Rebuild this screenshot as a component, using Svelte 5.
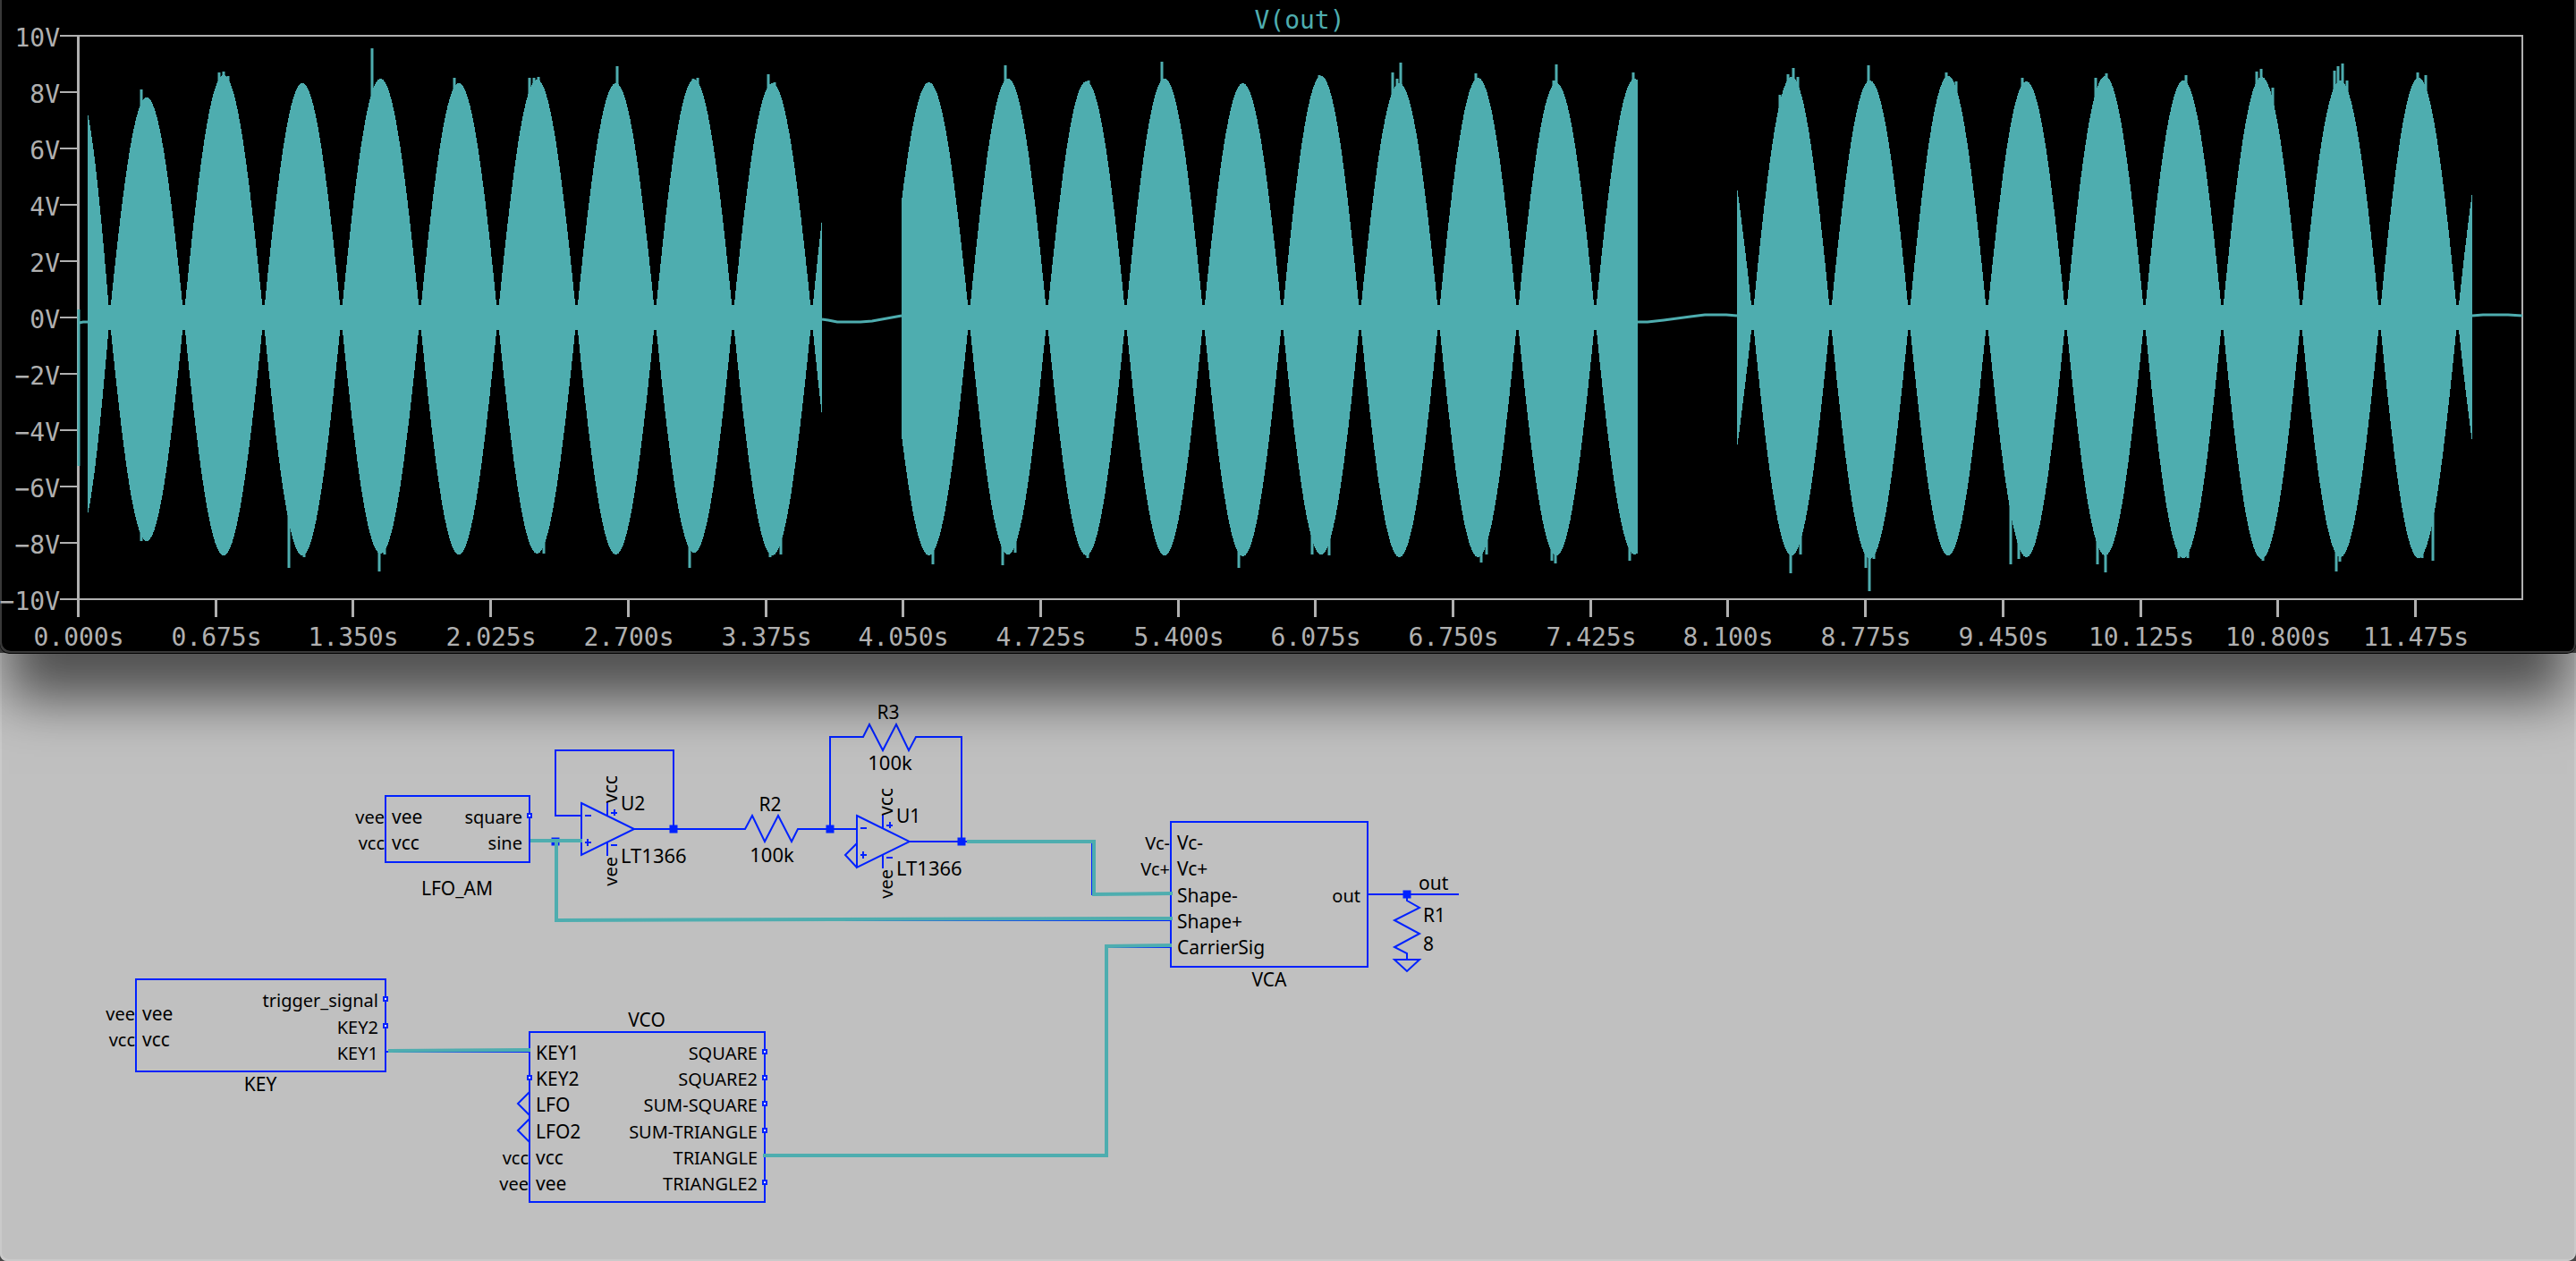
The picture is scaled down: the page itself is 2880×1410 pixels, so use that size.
<script>
  // ---- waveform trace ----
  const ZERO = 355;
  // Each lobe: [null before, null after, upper peak y, lower peak y]
  const bursts = [
    {
      from: 98, to: 919,
      lobes: [
        [54, 122, 103, 598], [122, 205, 109, 605], [205, 294, 84, 621], [294, 381, 93, 621],
        [381, 469, 88, 619], [469, 556, 93, 620], [556, 644, 89, 619], [644, 732, 93, 620],
        [732, 819, 89, 618], [819, 907, 93, 621], [907, 994, 88, 622]
      ]
    },
    {
      from: 1008, to: 1831,
      lobes: [
        [993, 1083, 92, 621], [1083, 1170, 88, 620], [1170, 1258, 91, 621], [1258, 1345, 88, 621],
        [1345, 1433, 93, 622], [1433, 1520, 85, 620], [1520, 1608, 93, 623], [1608, 1696, 87, 623],
        [1696, 1783, 93, 621], [1783, 1871, 88, 620]
      ]
    },
    {
      from: 1942, to: 2764,
      lobes: [
        [1871, 1959, 110, 600], [1959, 2046, 86, 621], [2046, 2134, 90, 625], [2134, 2221, 85, 621],
        [2221, 2309, 91, 623], [2309, 2397, 85, 621], [2397, 2484, 90, 624], [2484, 2572, 86, 625],
        [2572, 2660, 90, 623], [2660, 2747, 87, 624], [2747, 2835, 107, 602]
      ]
    }
  ];

  const spikes = [
    [158, 100], [245, 81], [250, 80], [255, 85], [416, 54], [508, 87], [592, 87], [597, 87], [602, 86],
    [690, 74], [775, 88], [780, 87], [859, 83], [866, 92], [1124, 73], [1217, 90], [1299, 69],
    [1475, 84], [1557, 81], [1562, 88], [1566, 70], [1650, 82], [1737, 90], [1740, 72], [1826, 81],
    [1999, 83], [2005, 76], [2010, 86], [1990, 106], [2089, 73], [2176, 81], [2187, 91], [2261, 87],
    [2343, 87], [2355, 82], [2444, 84], [2523, 80], [2528, 77], [2541, 98], [2610, 79], [2614, 74],
    [2619, 71], [2624, 90], [2703, 81], [2712, 84],
    [158, 605], [323, 635], [340, 623], [424, 639], [430, 620], [608, 619], [771, 635], [861, 623], [873, 620],
    [1043, 631], [1121, 632], [1135, 618], [1216, 624], [1385, 635], [1467, 620], [1486, 621],
    [1656, 629], [1662, 620], [1735, 627], [1739, 630], [1822, 627], [2002, 641], [2013, 620],
    [2086, 635], [2090, 661], [2095, 625], [2248, 631], [2257, 625], [2345, 631], [2354, 640],
    [2436, 624], [2446, 624], [2530, 627], [2612, 639], [2616, 628], [2708, 624], [2720, 627]
  ];

  function lobeAt(lobes, x) {
    return lobes.find(([a, b]) => x >= a && x < b) ?? lobes[lobes.length - 1];
  }

  function burstPath({ from, to, lobes }) {
    const upper = [];
    const lower = [];
    for (let x = from; x < to; x += 1) {
      const [a, b, top, bottom] = lobeAt(lobes, x);
      const s = Math.pow(Math.abs(Math.sin((Math.PI * (x - a)) / (b - a))), 0.97);
      const up = Math.round(ZERO - Math.max(14, s * (ZERO - top)));
      const down = Math.round(ZERO + Math.max(14, s * (bottom - ZERO)));
      upper.push(`V${up}H${x + 1}`);
      lower.unshift(`V${down}H${x}`);
    }
    return `M${from} ${ZERO}${upper.join('')}${lower.join('')}Z`;
  }

  const tracePath = bursts.map(burstPath).join('');
  const spikePath = spikes.map(([x, y]) => `M${x} ${ZERO + (y < ZERO ? -210 : 210)}V${y}`).join('');

  const yTicks = Array.from({ length: 11 }, (_, i) => {
    const v = 10 - i * 2;
    return { y: 40 + i * 63, label: `${v < 0 ? '−' : ''}${Math.abs(v)}V` };
  });
  const xTicks = Array.from({ length: 18 }, (_, i) => ({
    x: Math.round(88 + i * 153.7),
    label: `${(i * 0.675).toFixed(3)}s`
  }));

  // ---- schematic ----
  const blocks = [
    {
      name: 'LFO_AM', x: 431, y: 890, w: 161, h: 74, nx: 511, ny: 1001,
      left: [['vee', 912, 'vee'], ['vcc', 941, 'vcc']],
      right: [['square', 912, 'open'], ['sine', 941]]
    },
    {
      name: 'KEY', x: 152, y: 1095, w: 279, h: 103, nx: 291, ny: 1220,
      left: [['vee', 1132, 'vee'], ['vcc', 1161, 'vcc']],
      right: [['trigger_signal', 1117, 'open'], ['KEY2', 1147, 'open'], ['KEY1', 1176]]
    },
    {
      name: 'VCO', x: 592, y: 1154, w: 263, h: 190, nx: 723, ny: 1148,
      left: [['KEY1', 1176], ['KEY2', 1205, 'open'], ['LFO', 1234, 'gnd'], ['LFO2', 1264, 'gnd'],
        ['vcc', 1293, 'vcc'], ['vee', 1322, 'vee']],
      right: [['SQUARE', 1176, 'open'], ['SQUARE2', 1205, 'open'], ['SUM-SQUARE', 1234, 'open'],
        ['SUM-TRIANGLE', 1264, 'open'], ['TRIANGLE', 1293], ['TRIANGLE2', 1322, 'open']]
    },
    {
      name: 'VCA', x: 1309, y: 919, w: 220, h: 162, nx: 1419, ny: 1103,
      left: [['Vc-', 941, 'Vc-'], ['Vc+', 970, 'Vc+'], ['Shape-', 1000], ['Shape+', 1029], ['CarrierSig', 1058]],
      right: [['out', 1000]]
    }
  ];

  const opamps = [
    { ref: 'U2', x: 650, y: 927 },
    { ref: 'U1', x: 958, y: 941 }
  ];

  const nodes = [[753, 927], [621, 941], [928, 927], [1075, 941], [1573, 1000]];

  const values = [
    ['R2', 861, 907, 'ref'], ['100k', 863, 964, 'val'], ['R3', 993, 804, 'ref'], ['100k', 995, 861, 'val']
  ];
</script>

<main>
  <section class="plot" aria-label="Waveform viewer">
    <svg viewBox="0 0 2880 728" role="img" aria-label="V(out) against time">
      <g class="axis">
        <path class="thin" d="M87 40H2820V670H87" />
        <path class="thick" d="M87.5 39V690" />
        {#each yTicks as t}
          <path class="thin" d="M67 {t.y}H87" />
        {/each}
        {#each xTicks as t}
          <path class="thick" d="M{t.x - 0.5} 670V690" />
        {/each}
      </g>
      <g class="trace">
        <path class="fill" d={tracePath} />
        <path class="spike" d={spikePath} />
        <path class="start" d="M88 346V521" />
        <path class="quiet" d="M88 361L93 360H98M919 357L926 358L936 360H962L975 359L1008 353M1831 360H1842L1860 358L1890 354L1906 352H1930L1942 353M2764 353L2776 352H2804L2820 353" />
      </g>
      <g class="scale">
        {#each yTicks as t}
          <text class="end" x="67" y={t.y + 12}>{t.label}</text>
        {/each}
        {#each xTicks as t}
          <text class="mid" x={t.x} y="722">{t.label}</text>
        {/each}
        <text class="mid title" x="1453" y="32">V(out)</text>
      </g>
    </svg>
  </section>

  <section class="schematic" aria-label="Schematic">
    <svg viewBox="0 730 2880 680" role="img" aria-label="Circuit schematic">
      <g class="wire">
        <path d="M650 912H621V839H753V927M709 927H833L841 912L855 941L870 912L885 941L892 927H958" />
        <path d="M928 927V824H965L972 810L987 839L1002 810L1016 839L1024 824H1075V941M1016 941H1221V1000H1309" />
        <path d="M592 941H650M621 941V1029H1309M431 1176H592M855 1293H1236V1059H1309" />
        <path d="M1529 1000H1631M1573 1000V1007L1587 1015L1559 1029L1587 1044L1559 1059L1573 1066V1073M1559 1073H1587L1573 1086Z" />
        <path d="M958 943L945 956L958 970" />
      </g>

      {#each blocks as b}
        <rect class="box" x={b.x} y={b.y} width={b.w} height={b.h} />
        <text class="mid name" x={b.nx} y={b.ny}>{b.name}</text>
        {#each b.left as [label, y, kind]}
          <text class="pin" x={b.x + 7} y={y + 9}>{label}</text>
          {#if kind === 'open'}
            <rect class="stub" x={b.x - 2} y={y - 2} width="4" height="4" />
          {:else if kind === 'gnd'}
            <path class="sym" d="M{b.x} {y - 13}L{b.x - 13} {y}L{b.x} {y + 13}" />
          {:else if kind}
            <text class="pin end" x={b.x - 1} y={y + 9}>{kind}</text>
          {/if}
        {/each}
        {#each b.right as [label, y, kind]}
          <text class="pin end" x={b.x + b.w - 8} y={y + 9}>{label}</text>
          {#if kind === 'open'}
            <rect class="stub" x={b.x + b.w - 2} y={y - 2} width="4" height="4" />
          {/if}
        {/each}
      {/each}

      {#each opamps as u}
        <g transform="translate({u.x} {u.y})">
          <path class="sym" d="M0 -29L59 0L0 29ZM29 -30V-15M29 15V30M4 -15H11M4 15H11M7 11V19M33 -18H40M37 -22V-15M33 18H40" />
          <text class="pin" transform="translate(40 -29) rotate(-90)">vcc</text>
          <text class="pin end" transform="translate(40 31) rotate(-90)">vee</text>
          <text class="ref" x="44" y="-21">{u.ref}</text>
          <text class="val" x="44" y="38">LT1366</text>
        </g>
      {/each}

      {#each nodes as [x, y]}
        <rect class="node" x={x - 4.5} y={y - 4.5} width="9" height="9" />
      {/each}

      {#each values as [label, x, y, kind]}
        <text class="mid {kind}" {x} {y}>{label}</text>
      {/each}
      <text class="ref" x="1586" y="995">out</text>
      <text class="ref" x="1591" y="1031">R1</text>
      <text class="ref" x="1591" y="1063">8</text>

      <path class="probe" d="M595 940H649M622 941V1029L1309 1027" />
      <path class="probe" d="M1083 941H1223V1000L1309 999" />
      <path class="probe" d="M436 1175L591 1174M855 1292H1237V1058L1308 1057" />
    </svg>
  </section>
</main>

<style>
  :global(body) {
    margin: 0;
    background: #484848;
  }
  main {
    display: flex;
    flex-direction: column;
    min-width: 0;
  }
  svg {
    display: block;
    width: 100%;
    height: auto;
  }
  .plot {
    position: relative;
    z-index: 1;
    background: #000;
    border-radius: 0 0 10px 10px;
    box-shadow: inset 2px -2px 0 #393939, inset -2px 0 0 #393939, 0 1px 0 #000,
      0 62px 56px -10px rgba(0, 0, 0, 0.58);
    padding-bottom: 2px;
  }
  .schematic {
    background: #c0c0c0;
    box-shadow: inset 2px -2px 0 #cacaca, inset -2px 0 0 #cacaca;
    border-radius: 0 0 10px 8px;
  }
  .axis path,
  .wire path,
  .quiet,
  .start,
  .spike,
  .box,
  .sym,
  .probe {
    fill: none;
  }
  .axis {
    stroke: #b0b0b0;
  }
  .thin {
    stroke-width: 2;
  }
  .thick {
    stroke-width: 3;
  }
  .fill {
    fill: #4eadaf;
    shape-rendering: crispEdges;
  }
  .trace path:not(.fill) {
    stroke: #4eadaf;
    stroke-width: 3;
  }
  .trace .start {
    stroke-width: 2;
  }
  .scale text {
    font-family: 'DejaVu Sans Mono', monospace;
    font-size: 28px;
    fill: #b0b0b0;
  }
  .scale .title {
    fill: #4eadaf;
  }
  .mid {
    text-anchor: middle;
  }
  .end {
    text-anchor: end;
  }
  .wire path,
  .box,
  .stub,
  .sym {
    stroke: #0022ff;
    stroke-width: 2;
  }
  .stub {
    fill: #e4e4ff;
  }
  .node {
    fill: #0022ff;
  }
  .probe {
    stroke: #4eadaf;
    stroke-width: 4;
    stroke-linecap: square;
  }
  .schematic text {
    font-family: 'Noto Sans', sans-serif;
    font-size: 21px;
    fill: #000;
  }
  .schematic .pin.end {
    font-size: 20px;
  }
  .schematic .val {
    font-size: 22px;
  }
</style>
